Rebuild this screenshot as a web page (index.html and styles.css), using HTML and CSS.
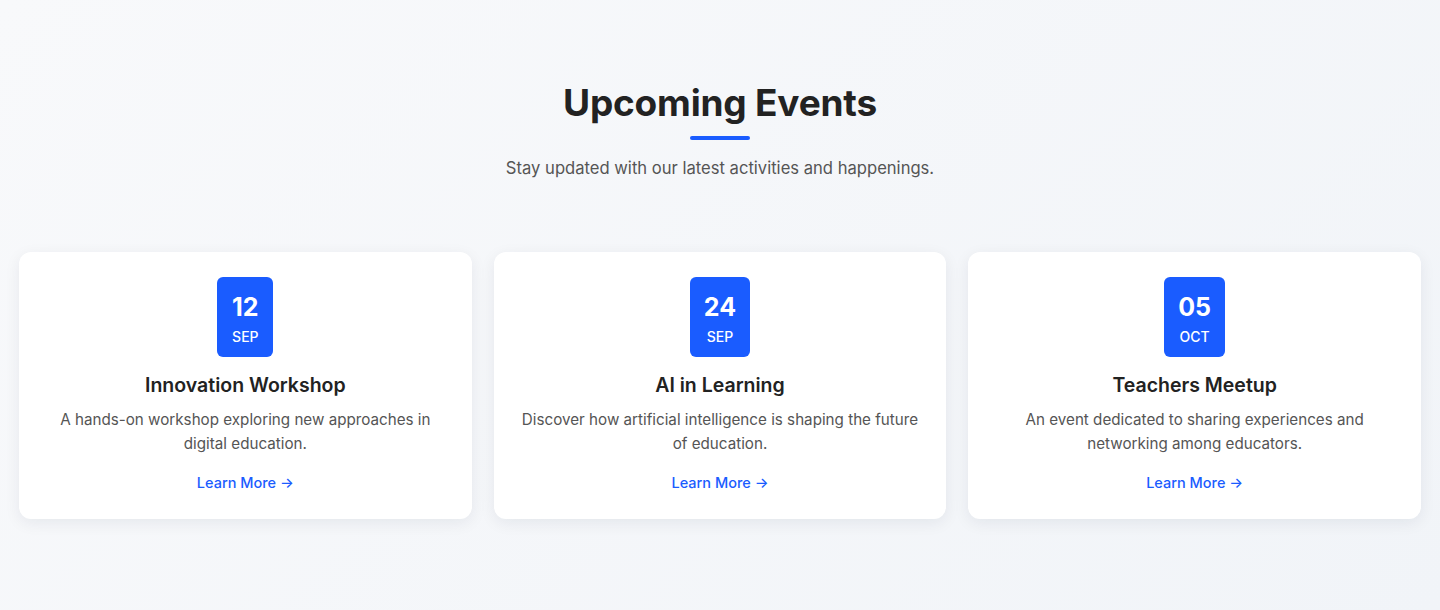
FILE: index.html
```html
<!DOCTYPE html>
<html lang="en">
<head>
<meta charset="utf-8">
<title>Upcoming Events</title>
<link rel="stylesheet" href="styles.css">
</head>
<body>
<section class="events">
  <header class="events-header">
    <h2 class="events-title">Upcoming Events</h2>
    <div class="events-rule"></div>
    <p class="events-sub">Stay updated with our latest activities and happenings.</p>
  </header>
  <div class="events-grid">
    <article class="card">
      <div class="date"><span class="day">12</span><span class="month">SEP</span></div>
      <h3 class="card-title">Innovation Workshop</h3>
      <p class="card-text">A hands-on workshop exploring new approaches in digital education.</p>
      <a class="card-link" href="#">Learn More →</a>
    </article>
    <article class="card">
      <div class="date"><span class="day">24</span><span class="month">SEP</span></div>
      <h3 class="card-title">AI in Learning</h3>
      <p class="card-text">Discover how artificial intelligence is shaping the future of education.</p>
      <a class="card-link" href="#">Learn More →</a>
    </article>
    <article class="card">
      <div class="date"><span class="day">05</span><span class="month">OCT</span></div>
      <h3 class="card-title">Teachers Meetup</h3>
      <p class="card-text">An event dedicated to sharing experiences and networking among educators.</p>
      <a class="card-link" href="#">Learn More →</a>
    </article>
  </div>
</section>
</body>
</html>
```

FILE: styles.css
```css
* { box-sizing: border-box; }
html, body { margin: 0; padding: 0; }
body {
  font-family: Inter, "Noto Sans", sans-serif;
  background: linear-gradient(135deg, #f8f9fb 0%, #f1f4f8 100%);
  min-height: 610px;
  color: #222;
}
.events {
  padding: 80px 19px 90px;
}
.events-header {
  text-align: center;
  display: flex;
  flex-direction: column;
  align-items: center;
}
.events-title {
  margin: 0;
  font-size: 37px;
  line-height: 46px;
  font-weight: 700;
  color: #222;
  letter-spacing: -0.2px;
}
.events-rule {
  width: 60px;
  height: 4px;
  border-radius: 2px;
  background: #1a5cff;
  margin-top: 10px;
}
.events-sub {
  margin: 15px 0 0;
  font-size: 16.6px;
  line-height: 26px;
  color: #555;
}
.events-grid {
  margin-top: 71px;
  display: grid;
  grid-template-columns: repeat(3, 1fr);
  gap: 22px;
}
.card {
  background: #fff;
  border-radius: 12px;
  box-shadow: 0 4px 16px rgba(20, 30, 60, 0.07);
  padding: 25px 24px 25px;
  display: flex;
  flex-direction: column;
  align-items: center;
  text-align: center;
}
.date {
  background: #1a5cff;
  color: #fff;
  border-radius: 6px;
  min-width: 56px;
  height: 80px;
  padding: 4px 14px 0;
  display: flex;
  flex-direction: column;
  align-items: center;
  justify-content: center;
}
.day {
  font-size: 25px;
  line-height: 30px;
  font-weight: 700;
}
.month {
  font-size: 14px;
  line-height: 18px;
  font-weight: 500;
  margin-top: 6px;
}
.card-title {
  margin: 14px 0 0;
  font-size: 19.5px;
  line-height: 28px;
  font-weight: 600;
  color: #222;
}
.card-text {
  margin: 9px 0 0;
  font-size: 15.2px;
  line-height: 24px;
  color: #555;
}
.card-link {
  margin-top: 16px;
  font-size: 14.5px;
  line-height: 22px;
  font-weight: 500;
  color: #1a5cff;
  text-decoration: none;
}
```
